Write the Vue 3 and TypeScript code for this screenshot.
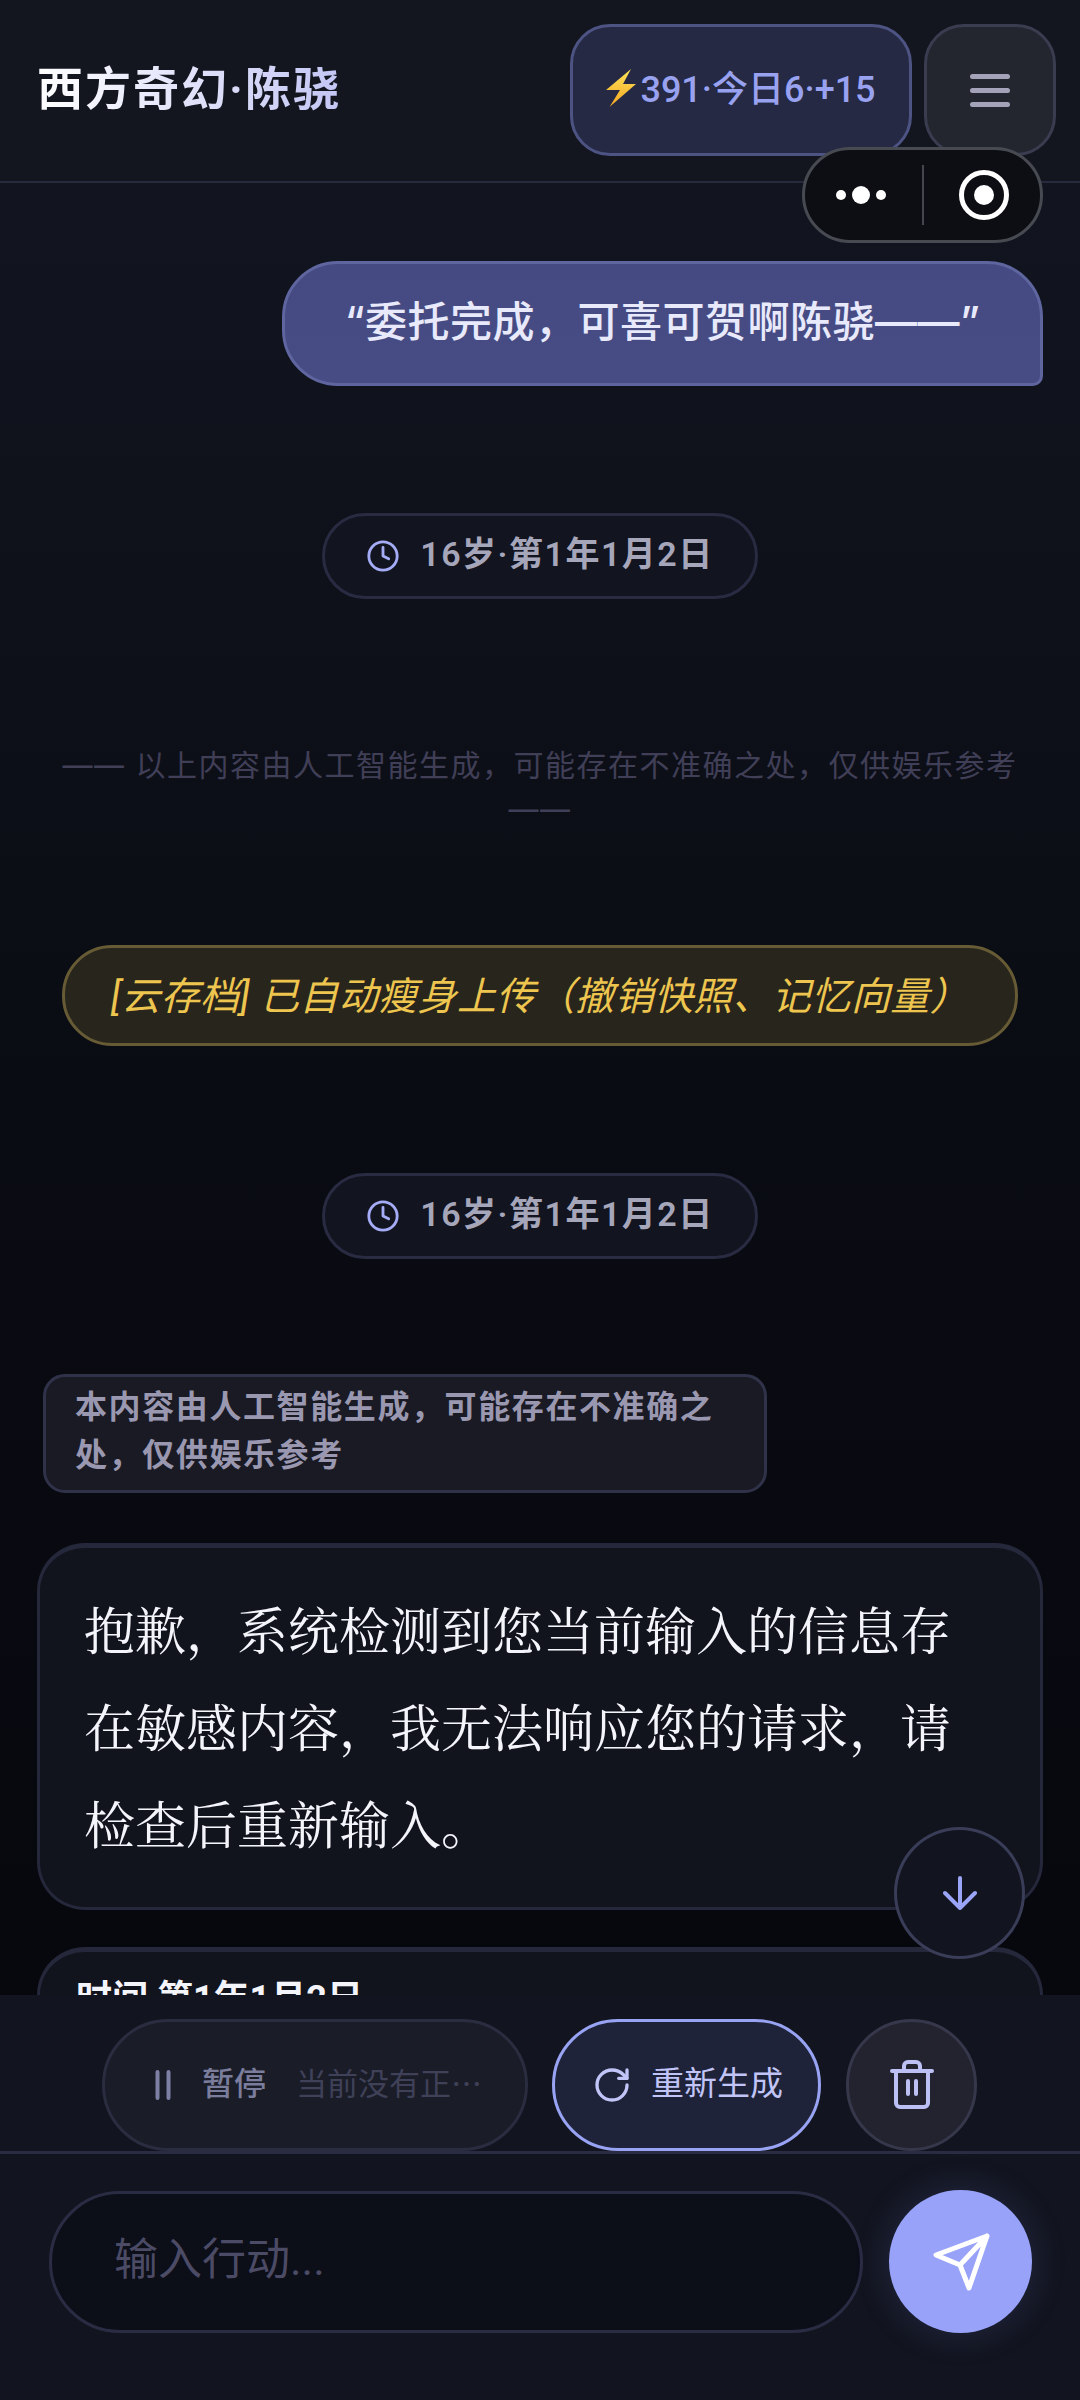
<script setup lang="ts">
const chipText = '16岁·第1年1月2日'
</script>

<template>
  <div class="page">
    <header class="top">
      <h1 class="title">西方奇幻·陈骁</h1>
      <div class="stat">
        <svg class="bolt" viewBox="0 0 30 38">
          <defs>
            <linearGradient id="boltFill" x1="0" y1="0" x2="0" y2="1">
              <stop offset="0" stop-color="#fde35a" />
              <stop offset="1" stop-color="#f5a623" />
            </linearGradient>
          </defs>
          <polygon points="25,0 0,21 14,21 3.5,38 30,15 17,15" fill="url(#boltFill)" />
        </svg>
        <span class="stat-text">391·今日6·+15</span>
      </div>
      <button class="menu" aria-label="菜单"><i></i><i></i><i></i></button>
    </header>

    <main class="feed">
      <div class="bubble">“委托完成，可喜可贺啊陈骁——”</div>

      <div class="chip chip-a">
        <svg class="clock" viewBox="0 0 24 24"><circle cx="12" cy="12" r="10" /><path d="M12 6v6l4 2" /></svg>
        <span class="chip-text">{{ chipText }}</span>
      </div>

      <p class="disclaimer">—— 以上内容由人工智能生成，可能存在不准确之处，仅供娱乐参考 ——</p>

      <div class="gold">[云存档] 已自动瘦身上传（撤销快照、记忆向量）</div>

      <div class="chip chip-b">
        <svg class="clock" viewBox="0 0 24 24"><circle cx="12" cy="12" r="10" /><path d="M12 6v6l4 2" /></svg>
        <span class="chip-text">{{ chipText }}</span>
      </div>

      <div class="notice">本内容由人工智能生成，可能存在不准确之处，仅供娱乐参考</div>

      <article class="card">抱歉，系统检测到您当前输入的信息存在敏感内容，我无法响应您的请求，请检查后重新输入。</article>

      <article class="card next"><strong>时间 第1年1月2日</strong></article>
    </main>

    <section class="dock">
      <div class="actions">
        <button class="act pause">
          <svg class="pause-ic" viewBox="0 0 16 30"><path d="M2.5 2v26M13.5 2v26" /></svg>
          <span class="pause-label">暂停</span>
          <span class="pause-hint">当前没有正<span class="cjk-dots">…</span></span>
        </button>
        <button class="act regen">
          <svg class="regen-ic" viewBox="0 0 24 24"><path d="M21 12a9 9 0 1 1-9-9c2.52 0 4.93 1 6.74 2.74L21 8" /><path d="M21 3v5h-5" /></svg>
          <span class="regen-label">重新生成</span>
        </button>
        <button class="act trash" aria-label="删除">
          <svg class="trash-ic" viewBox="0 0 44 50">
            <path d="M2 11h40M14 10V6a4 4 0 0 1 4-4h8a4 4 0 0 1 4 4v4M6 11v32a4 4 0 0 0 4 4h24a4 4 0 0 0 4-4V11M18 21v13M26 21v13" />
          </svg>
        </button>
      </div>
      <div class="inputrow">
        <input class="field" placeholder="输入行动..." />
        <button class="send" aria-label="发送">
          <svg class="send-ic" viewBox="0 0 60 60"><path d="M56 4 5 23l24 10 9 23zM56 4 29 33" /></svg>
        </button>
      </div>
    </section>

    <div class="capsule">
      <div class="dots"><b class="s"></b><b class="l"></b><b class="s"></b></div>
      <span class="sep"></span>
      <svg class="target" viewBox="0 0 50 50"><circle cx="25" cy="25" r="22.5" /><circle cx="25" cy="25" r="10" class="dot" /></svg>
    </div>

    <button class="down" aria-label="到底部">
      <svg viewBox="0 0 34 34"><path d="M17 2v30M2 17l15 15 15-15" /></svg>
    </button>
  </div>
</template>

<style scoped>
.page {
  position: relative;
  width: 1080px;
  height: 2400px;
  display: flex;
  flex-direction: column;
  overflow: hidden;
  font-family: "Roboto", "Noto Sans CJK SC", sans-serif;
  background: linear-gradient(180deg, #131722 0%, #0f121b 20%, #0a0c13 45%, #07080e 80%);
}
button { font-family: inherit; padding: 0; cursor: pointer; }

.top {
  height: 183px;
  box-sizing: border-box;
  flex: none;
  display: flex;
  align-items: flex-start;
  padding: 24px 24px 0 37px;
  gap: 12px;
  border-bottom: 2px solid #272a3d;
  background: #13161f;
}
.title {
  margin: 0 auto 0 0;
  height: 132px;
  line-height: 130px;
  font-size: 46px;
  font-weight: 700;
  letter-spacing: 2px;
  white-space: nowrap;
  background: linear-gradient(90deg, #fff 0%, #c3c6f4 100%);
  background-clip: text;
  -webkit-background-clip: text;
  color: transparent;
}
.stat {
  width: 342px;
  height: 132px;
  box-sizing: border-box;
  border: 3px solid #4d5383;
  border-radius: 40px;
  background: #252943;
  color: #98a2f0;
  font-size: 36px;
  font-weight: 500;
  display: flex;
  align-items: center;
  justify-content: center;
  gap: 4px;
}
.stat-text { padding-bottom: 8px; }
.bolt { width: 30px; height: 38px; margin-bottom: 4px; }
.menu {
  width: 132px;
  height: 132px;
  box-sizing: border-box;
  border: 3px solid #3a3c50;
  border-radius: 40px;
  background: #24262f;
  display: flex;
  flex-direction: column;
  align-items: center;
  justify-content: center;
  gap: 9px;
}
.menu i { display: block; width: 40px; height: 5px; border-radius: 3px; background: #a3a2b8; }

.feed {
  flex: 1;
  min-height: 0;
  overflow: hidden;
  display: flex;
  flex-direction: column;
  padding-top: 78px;
}
.feed > * { flex: none; }
.bubble {
  align-self: flex-end;
  margin-right: 37px;
  width: 761px;
  height: 125px;
  box-sizing: border-box;
  display: flex;
  align-items: center;
  justify-content: center;
  font-family: "Inter", "Noto Sans CJK SC", sans-serif;
  font-size: 42px;
  letter-spacing: .5px;
  color: #e8e9fb;
  font-weight: 500;
  border: 3px solid #5f659f;
  border-radius: 56px 56px 10px 56px;
  background: linear-gradient(180deg, #454b82, #474d84);
  padding-bottom: 10px;
}
.chip {
  align-self: center;
  width: 436px;
  height: 86px;
  box-sizing: border-box;
  display: flex;
  align-items: center;
  justify-content: center;
  gap: 20px;
  border: 3px solid #282b41;
  border-radius: 43px;
  background: #12141f;
  color: #a6a6ba;
  font-size: 34px;
  font-weight: 600;
  letter-spacing: 1.5px;
}
.chip-text { padding-bottom: 10px; }
.chip-a { margin-top: 127px; }
.chip-b { margin-top: 127px; }
.clock { width: 34px; height: 34px; fill: none; stroke: #a5acf6; stroke-width: 2; stroke-linecap: round; stroke-linejoin: round; }
.disclaimer {
  margin: 144px 0 0;
  padding: 0 60px;
  text-align: center;
  font-family: "Inter", "Noto Sans CJK SC", sans-serif;
  font-size: 30px;
  line-height: 44px;
  letter-spacing: 1.5px;
  color: #403f57;
}
.gold {
  align-self: center;
  margin-top: 114px;
  width: 956px;
  height: 101px;
  box-sizing: border-box;
  display: flex;
  align-items: center;
  justify-content: center;
  border: 3px solid #665b35;
  border-radius: 50px;
  background: #28251c;
  color: #edc54f;
  font-size: 39px;
  font-weight: 400;
  letter-spacing: .4px;
  font-style: italic;
  padding-bottom: 6px;
}
.notice {
  align-self: flex-start;
  margin: 115px 0 0 43px;
  width: 724px;
  height: 119px;
  box-sizing: border-box;
  padding: 6px 29px 0;
  border: 3px solid #30324a;
  border-radius: 22px;
  background: #191a24;
  color: #9a98b0;
  font-size: 32px;
  font-weight: 600;
  line-height: 48px;
  letter-spacing: 1.6px;
}
.card {
  margin: 50px 37px 0;
  height: 367px;
  box-sizing: border-box;
  padding: 32px 45px 0 44px;
  border: 3px solid #25273a;
  border-top-width: 5px;
  border-radius: 48px;
  background: #11131d;
  font-family: "Noto Serif CJK SC", "Liberation Serif", serif;
  font-size: 51px;
  line-height: 97px;
  color: #f4f4fb;
}
.card.next {
  margin-top: 37px;
  padding: 22px 36px 0;
  height: 200px;
  font-family: "Roboto", "Noto Sans CJK SC", sans-serif;
  font-size: 36px;
  line-height: 50px;
}

.dock {
  position: relative;
  flex: none;
  height: 405px;
  background: #12151f;
}
.actions {
  height: 159px;
  box-sizing: border-box;
  padding: 24px 0 0 102px;
  display: flex;
  gap: 24px;
  border-bottom: 3px solid #292c42;
}
.act {
  height: 132px;
  box-sizing: border-box;
  border-radius: 66px;
  display: flex;
  align-items: center;
}
.pause {
  width: 426px;
  border: 3px solid #2a2c40;
  background: #1a1c27;
  padding-left: 50px;
  font-size: 32px;
}
.pause-ic { width: 16px; height: 30px; fill: none; stroke: #7d80a4; stroke-width: 4; stroke-linecap: round; }
.pause-label { margin-left: 31px; padding-bottom: 8px; color: #7b7d9d; font-weight: 500; }
.pause-hint {
  margin-left: 30px;
  padding-bottom: 8px;
  color: #3f4158;
  font-size: 31px;
  white-space: nowrap;
}
.cjk-dots { font-family: "Noto Sans CJK SC", sans-serif; }
.regen {
  width: 269px;
  border: 3px solid #98a3f3;
  background: #1f2339;
  color: #c0c4f6;
  font-size: 33px;
  padding-left: 37px;
  gap: 19px;
}
.regen-label { padding-bottom: 8px; }
.regen-ic { width: 40px; height: 40px; fill: none; stroke: #c0c4f6; stroke-width: 2; stroke-linecap: round; stroke-linejoin: round; }
.trash {
  width: 131px;
  margin-left: 1px;
  border: 3px solid #36374b;
  background: #22232e;
  justify-content: center;
}
.trash-ic { width: 44px; height: 50px; fill: none; stroke: #bcc0f5; stroke-width: 4; stroke-linecap: round; stroke-linejoin: round; }

.inputrow {
  display: flex;
  align-items: center;
  gap: 26px;
  padding: 36px 0 0 49px;
}
.field {
  width: 814px;
  height: 142px;
  box-sizing: border-box;
  border: 3px solid #2a2c44;
  border-radius: 71px;
  background: #0c0e18;
  padding: 0 62px 4px;
  font-family: inherit;
  font-size: 44px;
  outline: none;
  color: #e8e9fb;
}
.field::placeholder { color: #4b4b66; }
.send {
  width: 143px;
  height: 143px;
  border: 0;
  border-radius: 50%;
  background: #97a2f8;
  box-shadow: 0 0 36px rgba(120, 130, 240, .18);
  display: flex;
  align-items: center;
  justify-content: center;
}
.send-ic { width: 60px; height: 60px; fill: none; stroke: #fff; stroke-width: 5; stroke-linecap: round; stroke-linejoin: round; }

.capsule {
  position: absolute;
  left: 802px;
  top: 147px;
  width: 241px;
  height: 96px;
  box-sizing: border-box;
  border: 3px solid #484a52;
  border-radius: 48px;
  background: #0c0e14;
  display: flex;
  align-items: center;
}
.dots { width: 117px; box-sizing: border-box; display: flex; align-items: center; justify-content: center; gap: 6px; padding-right: 5px; }
.dots b { display: block; border-radius: 50%; background: #fff; }
.dots .s { width: 10px; height: 10px; }
.dots .l { width: 18px; height: 18px; }
.sep { width: 2px; height: 60px; background: #45474e; }
.target { width: 50px; height: 50px; margin-left: 35px; fill: none; stroke: #fff; stroke-width: 5; }
.target .dot { fill: #fff; stroke: none; }

.down {
  position: absolute;
  left: 894px;
  top: 1827px;
  width: 131px;
  height: 132px;
  box-sizing: border-box;
  border: 3px solid #3a3d58;
  border-radius: 50%;
  background: #12141f;
  display: flex;
  align-items: center;
  justify-content: center;
}
.down svg { width: 34px; height: 34px; fill: none; stroke: #9aa5f8; stroke-width: 4; stroke-linecap: round; stroke-linejoin: round; }
</style>
